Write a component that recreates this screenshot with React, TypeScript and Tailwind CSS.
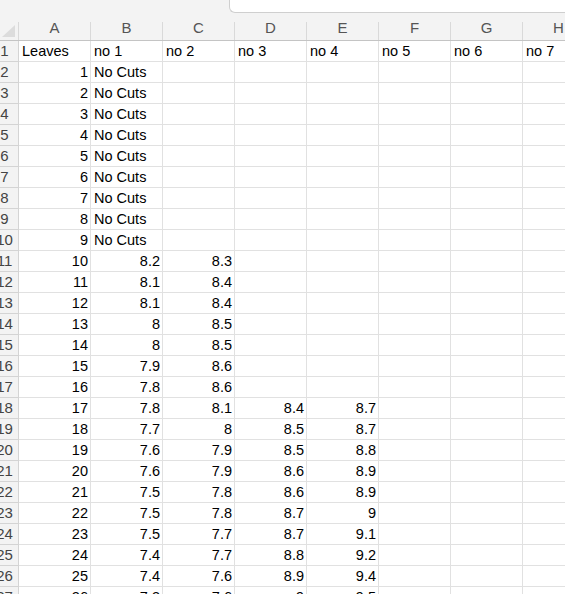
import React from "react";

const COLS = ["A", "B", "C", "D", "E", "F", "G", "H"];

type Cell = string | number | null;

// sheet rows, column A..H
const ROWS: Cell[][] = [
  ["Leaves", "no 1", "no 2", "no 3", "no 4", "no 5", "no 6", "no 7"],
  [1, "No Cuts"],
  [2, "No Cuts"],
  [3, "No Cuts"],
  [4, "No Cuts"],
  [5, "No Cuts"],
  [6, "No Cuts"],
  [7, "No Cuts"],
  [8, "No Cuts"],
  [9, "No Cuts"],
  [10, 8.2, 8.3],
  [11, 8.1, 8.4],
  [12, 8.1, 8.4],
  [13, 8, 8.5],
  [14, 8, 8.5],
  [15, 7.9, 8.6],
  [16, 7.8, 8.6],
  [17, 7.8, 8.1, 8.4, 8.7],
  [18, 7.7, 8, 8.5, 8.7],
  [19, 7.6, 7.9, 8.5, 8.8],
  [20, 7.6, 7.9, 8.6, 8.9],
  [21, 7.5, 7.8, 8.6, 8.9],
  [22, 7.5, 7.8, 8.7, 9],
  [23, 7.5, 7.7, 8.7, 9.1],
  [24, 7.4, 7.7, 8.8, 9.2],
  [25, 7.4, 7.6, 8.9, 9.4],
  [26, 7.3, 7.6, 9, 9.5],
];

function HeaderCell({ label }: { label: string }) {
  return (
    <div className="flex h-[28px] border-b border-[#c4c4c4] bg-[#f3f3f3]">
      <span className="flex-1 pt-[4px] text-center text-[15px] leading-[22px] text-[#555]">{label}</span>
      <span className="h-[18px] w-px self-end bg-[#d9d9d9]" />
    </div>
  );
}

function DataCell({ value }: { value: Cell }) {
  const isNum = typeof value === "number";
  return (
    <div
      className={`flex h-[21px] items-center overflow-visible whitespace-nowrap border-b border-r border-[#e1e1e1] pt-[1px] text-[14.5px] text-black ${
        isNum ? "justify-end pr-[2px]" : "justify-start pl-[3px]"
      }`}
    >
      {value ?? ""}
    </div>
  );
}

export default function App() {
  return (
    <div className="h-[594px] w-[565px] overflow-hidden bg-white font-['Liberation_Sans',Arial,sans-serif]">
      {/* strip above the grid with the edge of the name box */}
      <div className="flex h-[13px] bg-[#f3f3f3]">
        <div className="w-[229px]" />
        <div className="flex-1 rounded-bl-[6px] border-b border-l border-[#cfcfcf] bg-white" />
      </div>

      <div className="grid grid-cols-[19px_repeat(8,72px)]">
        {/* select-all corner */}
        <div className="flex h-[28px] items-end justify-end border-b border-[#c4c4c4] bg-[#f3f3f3]">
          <svg width="13" height="12" viewBox="0 0 13 12" className="mb-[3px] mr-[3px]">
            <polygon points="13,0 13,12 0,12" fill="#dcdcdc" />
          </svg>
          <span className="h-[18px] w-px self-end bg-[#d9d9d9]" />
        </div>
        {COLS.map((c) => (
          <HeaderCell key={c} label={c} />
        ))}

        {ROWS.map((row, r) => (
          <React.Fragment key={r}>
            <div className="flex h-[21px] items-center overflow-hidden border-b border-r border-[#d4d4d4] bg-[#f3f3f3] pt-[1px]">
              <span className="-ml-[14px] w-[37px] shrink-0 text-center text-[15px] text-[#444]">{r + 1}</span>
            </div>
            {COLS.map((_, c) => (
              <DataCell key={c} value={row[c] ?? null} />
            ))}
          </React.Fragment>
        ))}
      </div>
    </div>
  );
}
